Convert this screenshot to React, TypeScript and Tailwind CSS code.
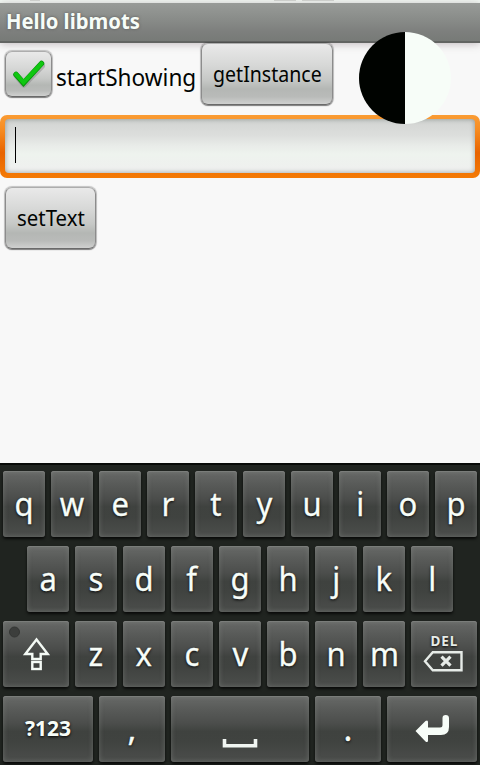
import type { ReactNode } from 'react';

const keyFace =
  'relative flex h-[66px] shrink-0 items-center justify-center rounded-[3px] bg-[linear-gradient(180deg,#686a68_0%,#5a5c5a_18%,#4b4d4b_42%,#3f423f_54%,#404340_70%,#4c4e4c_100%)] shadow-[inset_0_0_5px_rgba(135,138,135,0.55),inset_0_1px_0_#787a78,0_2px_3px_rgba(0,0,0,0.75)] text-[#f7fdf8] [text-shadow:0_1px_3px_#000]';

function Key({ children, width = 'w-[42px]' }: { children: ReactNode; width?: string }) {
  return <button className={`${keyFace} ${width}`}>{children}</button>;
}

function Letter({ char }: { char: string }) {
  return (
    <Key>
      <span className="block text-[33px] leading-[66px] scale-x-[0.94] [-webkit-text-stroke:0.3px_#f7fdf8]">{char}</span>
    </Key>
  );
}

const androidButton =
  'flex items-center justify-center rounded-[7px] border-[1.5px] border-t-[#adadad] border-x-[#8c8c8c] border-b-[#6a6a6a] bg-[linear-gradient(180deg,#e9e9e9_0%,#d7d8d7_35%,#c6c8c6_60%,#b4b7b4_75%,#b9bbb9_88%,#cfd0cf_100%)] shadow-[0_0_1px_1px_rgba(0,0,0,0.22),0_1px_1px_rgba(0,0,0,0.35)]';

export default function App() {
  return (
    <div className="relative flex h-[765px] w-[480px] flex-col overflow-hidden bg-[#f8f8f8] font-['Noto_Sans','Open_Sans',sans-serif] text-[#020402]">
      <div className="flex h-[3px] shrink-0 bg-[#f4faf5]">
        <div className="ml-[30px] h-px w-[10px] bg-[#d5dad6]" />
        <div className="ml-[234px] h-px w-[22px] bg-[#d5dad6]" />
        <div className="ml-[6px] h-px w-[32px] bg-[#d5dad6]" />
      </div>
      <header className="flex h-10 shrink-0 items-start border-b-2 border-[#626462] bg-[linear-gradient(180deg,#989b98_0%,#8a8d8a_40%,#7d7f7d_75%,#777a77_100%)] pl-1.5 shadow-[0_1px_8px_rgba(90,70,80,0.35)]">
        <h1 className="origin-left text-[21px] leading-[36px] font-bold whitespace-nowrap text-[#f7fdf8] scale-x-[0.965] [text-shadow:0_0_3px_#555]">
          Hello libmots
        </h1>
      </header>

      <main className="flex h-[420px] shrink-0 flex-col">
        <div className="flex h-[71px] shrink-0 items-start">
          <div className={`${androidButton} mt-2 ml-[5px] h-[46px] w-[47px] shrink-0`}>
            <svg width="38" height="38" viewBox="0 0 38 38" fill="none" className="shrink-0">
              <path d="M6.500 20.500l7.500 9L32 11" stroke="#777" strokeOpacity="0.4" strokeWidth="6" strokeLinecap="round" strokeLinejoin="round" />
              <path d="M6 19.500l7.500 8.500L31.500 8.500" stroke="#07920a" strokeWidth="5.500" strokeLinecap="round" />
              <path d="M6 19.200l7.500 8.300L31.500 8.500" stroke="#10c711" strokeWidth="4.200" strokeLinecap="round" />
            </svg>
          </div>
          <div className="mt-[18px] ml-1 h-8 w-[145px] shrink-0">
            <span className="block w-max origin-left text-2xl leading-8 scale-x-[0.942]">startShowing</span>
          </div>
          <button className={`${androidButton} h-[62px] w-[132px] shrink-0 pb-px`}>
            <span className="text-[21px] leading-7 scale-x-[0.93]">getInstance</span>
          </button>
        </div>
        <div className="mt-px h-[63px] shrink-0 rounded-[7px] bg-[linear-gradient(180deg,#fa9c34_0%,#f68a20_25%,#e86400_60%,#f47a05_100%)] p-[5px] pt-1">
          <div className="flex h-[54px] rounded-[4px] bg-[linear-gradient(180deg,#d2d4d2_0%,#dcdedc_30%,#e9ece9_50%,#eef3ee_65%,#efefef_100%)] pt-2 pl-[10px] shadow-[inset_0_0_5px_rgba(70,80,75,0.5)]">
            <div className="h-9 w-px bg-black" />
          </div>
        </div>
        <button className={`${androidButton} mt-[9px] ml-[5px] h-[62px] w-[91px] shrink-0 pb-px`}>
          <span className="text-[21px] leading-7 scale-x-[0.97]">setText</span>
        </button>
      </main>

      <section className="flex h-[302px] shrink-0 flex-col gap-[9px] border-t-2 border-[#080a08] bg-[#202420] pt-[6px]">
        <div className="flex justify-center gap-[6px]">
          {[...'qwertyuiop'].map((c) => <Letter key={c} char={c} />)}
        </div>
        <div className="flex justify-center gap-[6px]">
          {[...'asdfghjkl'].map((c) => <Letter key={c} char={c} />)}
        </div>
        <div className="flex justify-center gap-[6px]">
          <Key width="w-[66px]">
            <svg width="66" height="66" viewBox="0 0 66 66" fill="none">
              <circle cx="11.500" cy="11" r="5" fill="#3c3e3c" stroke="#343634" />
              <path d="M33.500 18.500L22.300 33H29.300v5h8.400v-5h7z" stroke="#f4faf5" strokeWidth="2.400" />
              <rect x="29.300" y="41" width="8.400" height="7" stroke="#f4faf5" strokeWidth="2.400" />
            </svg>
          </Key>
          {[...'zxcvbnm'].map((c) => <Letter key={c} char={c} />)}
          <Key width="w-[66px]">
            <span className="flex h-full flex-col items-center pt-[9px]">
              <span className="block text-[15px] leading-[20px] font-bold tracking-[1px] text-[#e6ebe7] scale-x-[0.9]">DEL</span>
              <svg width="42" height="22" viewBox="0 0 42 22" fill="none" stroke="#e6ebe7" strokeWidth="2.400" className="mr-[3px]">
                <path d="M10.800 2.200H39.500v18H10.800L3 11.200z" />
                <path d="M19.500 6.700l9 9m0-9l-9 9" strokeWidth="3.200" />
              </svg>
            </span>
          </Key>
        </div>
        <div className="flex justify-center gap-[6px]">
          <Key width="w-[90px]">
            <span className="-translate-y-px text-[21px] leading-[66px] font-bold">?123</span>
          </Key>
          <Key width="w-[66px]">
            <span className="block text-[33px] leading-[66px] [-webkit-text-stroke:0.4px_#f7fdf8]">,</span>
          </Key>
          <Key width="w-[138px]">
            <svg width="138" height="66" viewBox="0 0 138 66" fill="none">
              <path d="M53.500 43v6.700h31v-6.700" stroke="#f0f5f1" strokeWidth="3.600" />
            </svg>
          </Key>
          <Key width="w-[66px]">
            <span className="block text-[33px] leading-[66px] [-webkit-text-stroke:0.4px_#f7fdf8]">.</span>
          </Key>
          <Key width="w-[90px]">
            <svg width="90" height="66" viewBox="0 0 90 66" fill="none">
              <path d="M28.500 35L38.500 25q2.500-1.500 2.500 1V31.500H53q2.500 0 2.500-2.500V22q0-3 3.200-3t3.300 3V31q0 8-8 8H41v5.500q0 2.500-2.500 1z" fill="#f7fdf8" />
            </svg>
          </Key>
        </div>
      </section>

      <div className="absolute top-[32px] left-[359px] h-[92px] w-[92px] rounded-full bg-[linear-gradient(90deg,#000300_46px,#f7fdf8_46px)]" />
    </div>
  );
}
